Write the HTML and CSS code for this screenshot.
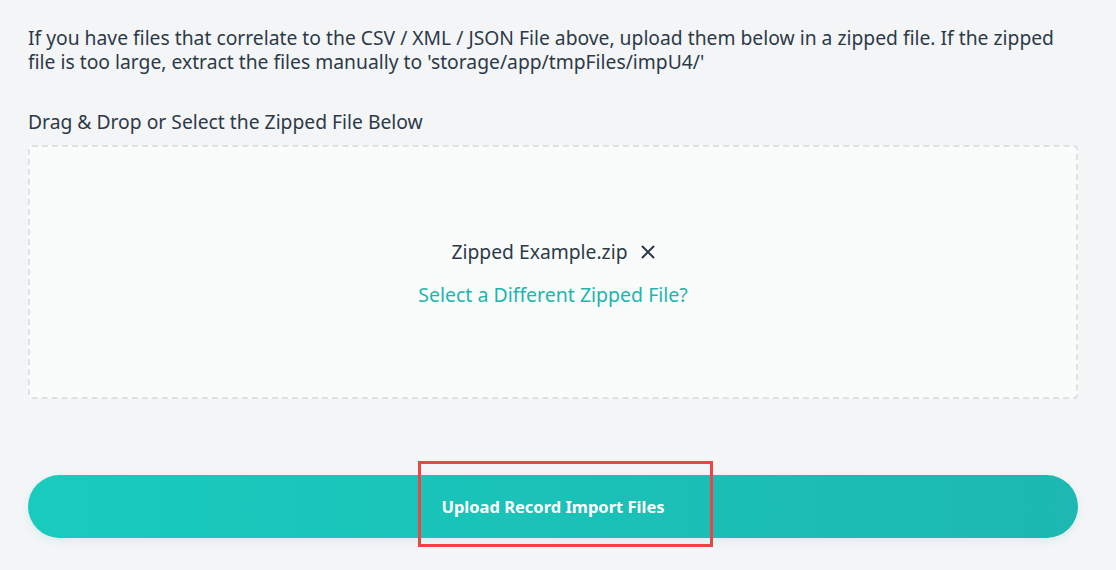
FILE: index.html
```html
<!DOCTYPE html>
<html>
<head>
<meta charset="utf-8">
<link rel="stylesheet" href="styles.css">
</head>
<body>
<main class="page">
  <p class="intro">If you have files that correlate to the CSV / XML / JSON File above, upload them below in a zipped file. If the zipped file is too large, extract the files manually to 'storage/app/tmpFiles/impU4/'</p>
  <div class="label">Drag &amp; Drop or Select the Zipped File Below</div>
  <div class="dropzone">
    <div class="file">
      <span>Zipped Example.zip</span>
      <svg class="x" width="14" height="14" viewBox="0 0 14 14"><path d="M1.5 1.5 L12.5 12.5 M12.5 1.5 L1.5 12.5" stroke="#2d3a45" stroke-width="2" stroke-linecap="round"/></svg>
    </div>
    <a class="change">Select a Different Zipped File?</a>
  </div>
  <div class="btn-wrap">
    <button class="upload">Upload Record Import Files</button>
    <div class="highlight"></div>
  </div>
</main>
</body>
</html>
```
FILE: styles.css
```css
* { box-sizing: border-box; }
html, body { margin: 0; background: #f4f5f7; }
body {
  font-family: "Noto Sans", "Open Sans", sans-serif;
  color: #2c3a47;
  width: 1116px;
  height: 570px;
  overflow: hidden;
}
.page {
  padding: 26px 38px 0 28px;
  display: flex;
  flex-direction: column;
}
.intro {
  margin: 0;
  font-size: 19.3px;
  line-height: 24px;
}
.label {
  margin-top: 36px;
  font-size: 19.3px;
  line-height: 24px;
}
.dropzone {
  margin-top: 11px;
  height: 254px;
  border: 2px dashed #e0e1e3;
  border-radius: 4px;
  background: #fafbfb;
  display: flex;
  flex-direction: column;
  align-items: center;
  justify-content: center;
  gap: 19px;
  padding-top: 2px;
}
.file {
  display: flex;
  align-items: center;
  gap: 13px;
  font-size: 19.3px;
  line-height: 24px;
}
.change {
  color: #1cb6ac;
  font-size: 19.5px;
  line-height: 24px;
}
.btn-wrap {
  position: relative;
  margin-top: 76px;
}
.upload {
  width: 100%;
  height: 63px;
  border: none;
  border-radius: 32px;
  background: linear-gradient(90deg, #19cbbe 0%, #1cb8b1 100%);
  box-shadow: 0 3px 8px rgba(28, 184, 177, 0.12);
  color: #fff;
  font-family: "Noto Sans", "Open Sans", sans-serif;
  font-weight: 700;
  font-size: 16.5px;
  padding: 0;
}
.highlight {
  position: absolute;
  left: 390px;
  top: -14px;
  width: 295px;
  height: 86px;
  border: 3px solid #ef4444;
  pointer-events: none;
}
```
